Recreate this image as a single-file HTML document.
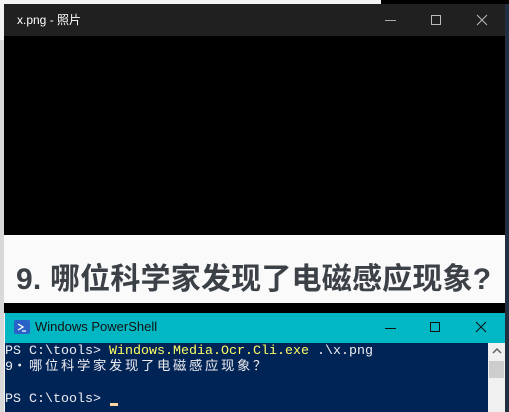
<!DOCTYPE html>
<html><head><meta charset="utf-8"><style>
*{margin:0;padding:0;box-sizing:border-box}
body{width:509px;height:412px;position:relative;overflow:hidden;background:#f3f3f3;font-family:"Liberation Sans","Noto Sans CJK SC",sans-serif}
.abs{position:absolute}
.cj{letter-spacing:2.67px}
</style></head><body>
<div class="abs" style="left:381px;top:0;width:128px;height:4px;background:#000"></div>
<div class="abs" style="left:0;top:40px;width:4px;height:372px;background:#d8d8d8"></div>
<div class="abs" style="left:505px;top:4px;width:4px;height:408px;background:#203040"></div>
<!-- photos window -->
<div class="abs" style="left:4px;top:4px;width:501px;height:32px;background:#202020"></div>
<div class="abs" style="left:17px;top:11px;color:#fff;font-size:12px;">x.png - 照片</div>
<div class="abs" style="left:385px;top:20px;width:11px;height:1px;background:#aaa"></div>
<div class="abs" style="left:431px;top:15px;width:10px;height:10px;border:1px solid #bbb"></div>
<svg class="abs" style="left:476px;top:14px" width="12" height="12"><path d="M1 1L11 11M11 1L1 11" stroke="#bbb" stroke-width="1"/></svg>
<div class="abs" style="left:4px;top:36px;width:501px;height:199px;background:#000"></div>
<div class="abs" style="left:4px;top:235px;width:501px;height:69px;background:#fafafa"></div>
<div class="abs" style="left:4px;top:303px;width:501px;height:10px;background:#000"></div>
<div class="abs" style="left:16px;top:254px;color:#3b4147;font-size:30px;font-weight:bold;white-space:nowrap;letter-spacing:0.2px">9. 哪位科学家发现了电磁感应现象?</div>
<!-- powershell -->
<div class="abs" style="left:5px;top:313px;width:500px;height:30px;background:#00b7c3"></div>
<div class="abs" style="left:14px;top:320px;width:16px;height:14px;background:#2a63c8;border-radius:2px"></div>
<svg class="abs" style="left:14px;top:320px" width="16" height="14"><path d="M4 4L9 7L4 10M8 11H12" stroke="#fff" stroke-width="1.3" fill="none"/></svg>
<div class="abs" style="left:35px;top:319px;color:#111;font-size:13px">Windows PowerShell</div>
<div class="abs" style="left:385px;top:328px;width:11px;height:1px;background:#111"></div>
<div class="abs" style="left:430px;top:322px;width:10px;height:10px;border:1px solid #111"></div>
<svg class="abs" style="left:475px;top:321px" width="12" height="12"><path d="M1 1L11 11M11 1L1 11" stroke="#111" stroke-width="1"/></svg>
<div class="abs" style="left:5px;top:343px;width:483px;height:69px;background:#012456"></div>
<div class="abs" style="left:488px;top:343px;width:17px;height:69px;background:#f0f0f0"></div>
<div class="abs" style="left:489px;top:361px;width:15px;height:17px;background:#cdcdcd"></div>
<svg class="abs" style="left:492px;top:347px" width="10" height="8"><path d="M1 6L5 2L9 6" stroke="#606060" stroke-width="1.5" fill="none"/></svg>
<div class="abs" style="left:5px;top:344px;color:#eeedf0;font-family:'Liberation Mono','Noto Sans CJK SC',monospace;font-size:13.33px;line-height:16px;white-space:pre">PS C:\tools> <span style="color:#ffff66">Windows.Media.Ocr.Cli.exe</span> .\x.png
9<span class="cj">・哪位科学家发现了电磁感应现象？</span>

PS C:\tools> </div>
<div class="abs" style="left:110px;top:403px;width:8px;height:3px;background:#fed8a0"></div>
</body></html>
